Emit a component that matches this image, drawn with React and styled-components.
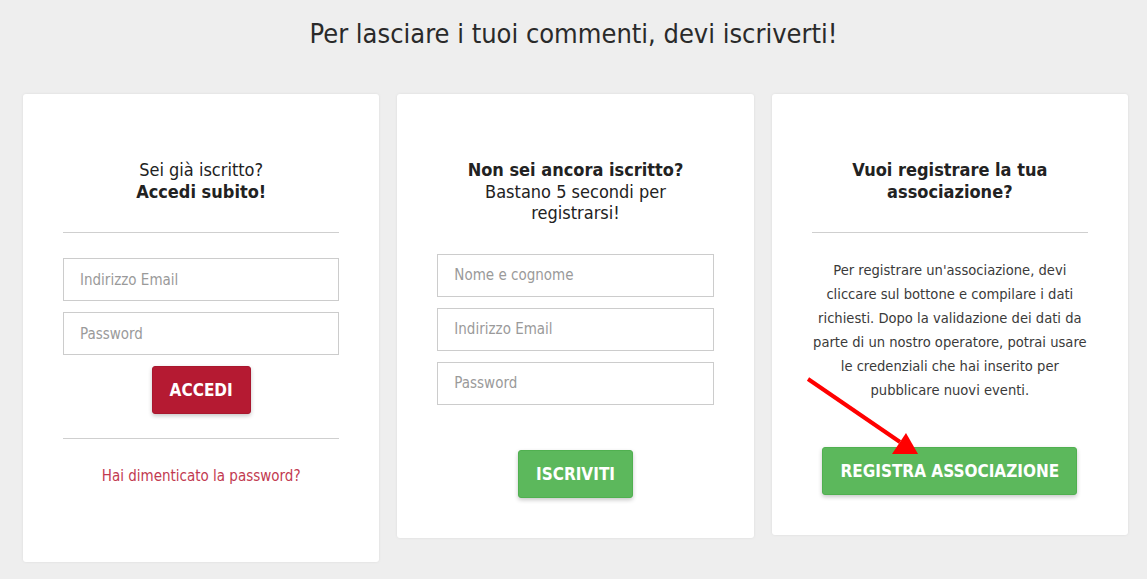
import React from 'react'
import styled, { createGlobalStyle } from 'styled-components'

const GlobalStyle = createGlobalStyle`
  body {
    margin: 0;
    background: #eeeeee;
    font-family: "Liberation Sans Narrow", "DejaVu Sans Condensed", "Liberation Sans", sans-serif;
    color: #222;
  }
`

const Page = styled.div`
  position: relative;
  height: 579px;
  overflow: hidden;
`

const Heading = styled.h1`
  margin: 0;
  padding-top: 16px;
  height: 94px;
  box-sizing: border-box;
  text-align: center;
  font-size: 27px;
  font-weight: 300;
  line-height: 36px;
  color: #2a2a2a;
`

const Cards = styled.div`
  display: grid;
  grid-template-columns: repeat(3, 1fr);
  gap: 18px;
  padding: 0 19px 0 23px;
  align-items: start;
`

const Card = styled.section`
  background: #fff;
  border-radius: 3px;
  box-shadow: 0 0 3px rgba(0, 0, 0, 0.08);
  padding: 65px 40px 40px;
  display: flex;
  flex-direction: column;
  align-items: stretch;
  text-align: center;
`

const Title = styled.div`
  font-size: 18px;
  line-height: 21.5px;
  color: #222;
  min-height: ${(p) => p.$lines * 21.5}px;
  b { font-weight: 700; }
`

const Rule = styled.hr`
  border: 0;
  border-top: 1px solid #cfcfcf;
  margin: ${(p) => p.$margin};
`

const Input = styled.input`
  box-sizing: border-box;
  width: 100%;
  height: 43px;
  border: 1px solid #cccccc;
  padding: 0 16px;
  font: inherit;
  font-size: 15px;
  color: #333;
  margin-top: ${(p) => p.$top ?? 11}px;
  &::placeholder { color: #9a9a9a; }
`

const Button = styled.button`
  align-self: center;
  height: 48px;
  padding: 0 ${(p) => p.$pad}px;
  margin-top: ${(p) => p.$top}px;
  border: 1px solid ${(p) => (p.$red ? '#a8172e' : '#50b050')};
  border-radius: 3px;
  background: ${(p) => (p.$red ? '#b51a32' : '#5cb85c')};
  color: #fff;
  font-family: inherit;
  font-size: 17px;
  font-weight: 700;
  white-space: nowrap;
  text-transform: uppercase;
  box-shadow: 0 2px 4px rgba(0, 0, 0, 0.22);
  cursor: pointer;
`

const ForgotLink = styled.a`
  display: block;
  margin: 26px 0 35px;
  font-size: 15px;
  line-height: 22px;
  color: #c23a50;
  text-decoration: none;
`

const Text = styled.p`
  margin: 0;
  font-size: 14.6px;
  line-height: 24px;
  white-space: nowrap;
  color: #3a3a3a;
`

const Arrow = styled.svg`
  position: absolute;
  left: 800px;
  top: 372px;
  pointer-events: none;
`

export default function App() {
  return (
    <Page>
      <GlobalStyle />
      <Heading>Per lasciare i tuoi commenti, devi iscriverti!</Heading>
      <Cards>
        <Card>
          <Title $lines={2}>
            Sei già iscritto?<br />
            <b>Accedi subito!</b>
          </Title>
          <Rule $margin="30px 0 25px" />
          <Input $top={0} type="email" placeholder="Indirizzo Email" />
          <Input $top={11} type="password" placeholder="Password" />
          <Button $red $pad={17} $top={11}>Accedi</Button>
          <Rule $margin="24px 0 0" />
          <ForgotLink href="#">Hai dimenticato la password?</ForgotLink>
        </Card>
        <Card>
          <Title $lines={3}>
            <b>Non sei ancora iscritto?</b><br />
            Bastano 5 secondi per<br />
            registrarsi!
          </Title>
          <Input $top={30} type="text" placeholder="Nome e cognome" />
          <Input type="email" placeholder="Indirizzo Email" />
          <Input type="password" placeholder="Password" />
          <Button $pad={17} $top={45}>Iscriviti</Button>
        </Card>
        <Card>
          <Title $lines={2}>
            <b>Vuoi registrare la tua<br />associazione?</b>
          </Title>
          <Rule $margin="30px 0 25px" />
          <Text>
            Per registrare un'associazione, devi<br />
            cliccare sul bottone e compilare i dati<br />
            richiesti. Dopo la validazione dei dati da<br />
            parte di un nostro operatore, potrai usare<br />
            le credenziali che hai inserito per<br />
            pubblicare nuovi eventi.
          </Text>
          <Button $pad={17} $top={45}>Registra associazione</Button>
        </Card>
      </Cards>
      <Arrow width="130" height="90" viewBox="0 0 130 90">
        <line x1="8" y1="7" x2="100" y2="70" stroke="#ff0000" strokeWidth="4" />
        <polygon points="118,82 92,82 106,61" fill="#ff0000" />
      </Arrow>
    </Page>
  )
}
